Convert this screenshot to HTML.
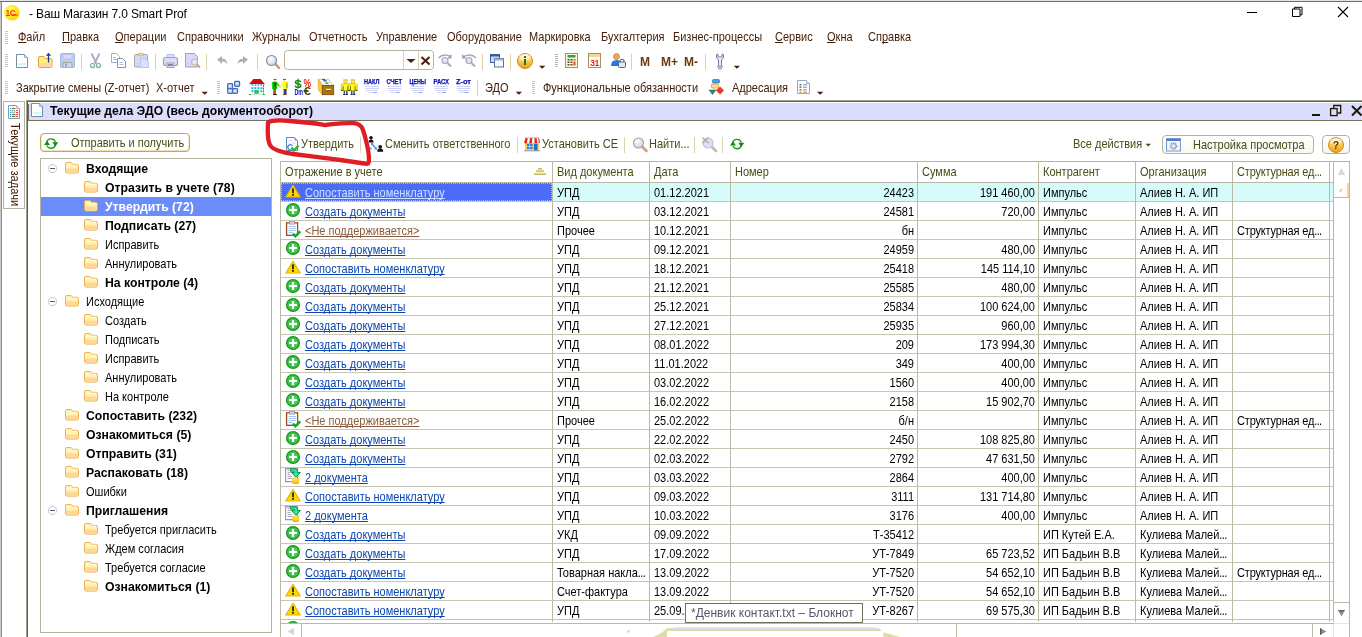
<!DOCTYPE html>
<html lang="ru"><head><meta charset="utf-8"><title>Ваш Магазин 7.0 Smart Prof</title>
<style>
html,body{margin:0;padding:0;background:#fff;width:1362px;height:637px;overflow:hidden}
body{will-change:transform;background:transparent;position:relative;font-family:"Liberation Sans",sans-serif;font-size:13px;color:#000;line-height:1}
.abs,.abs>*{position:absolute}
.t{position:absolute;white-space:nowrap;line-height:14px;height:14px;transform:scaleX(.846);transform-origin:0 0}
#ttl,#tip{transform:none}
.mn{color:#46200a;top:30px}
.mn u{text-decoration:underline;text-underline-offset:1px;text-decoration-skip-ink:none}
.tb{color:#46200a}
.ol{color:#4b4b14}
.grip{position:absolute;width:3px;height:13px;background:repeating-linear-gradient(to bottom,#c2c2b0 0,#c2c2b0 1px,#fff 1px,#fff 2px)}
.sep{position:absolute;width:1px;height:16px;background:#dcd4ae;margin-top:2px}
/* child window */
#cw{position:absolute;left:26px;top:100px;width:1336px;height:537px;border-left:1px solid #a2a292;border-top:1px solid #a2a292;box-sizing:border-box;background:#fff}
#cw:before{content:"";position:absolute;left:0;top:0;width:1335px;height:536px;border-left:1px solid #5e5e48;border-top:1px solid #5e5e48;box-sizing:border-box}
#ct{position:absolute;left:2px;top:2px;width:1333px;height:17px;background:#dcdcfc;box-shadow:0 1px 0 #74745e,-1px 1px 0 #74745e}
#ctt{position:absolute;left:21px;top:1px;font-weight:700;font-size:13px;line-height:14px;white-space:nowrap;color:#000;transform:scaleX(.935);transform-origin:0 0}
/* tree */
#tree{position:absolute;left:40px;top:158px;width:232px;height:475px;border:1px solid #b4b4a0;box-sizing:border-box;background:#fff}
.tr{position:absolute;left:0;width:230px;height:19px}
.tr.sel{background:#6a8dfb}
.tr .fw{position:absolute;top:3px;margin-left:-.5px}
.tr .tt{position:absolute;top:2.5px;line-height:14px;white-space:nowrap;transform:scaleX(.846);transform-origin:0 0}
.tr .tt.b{font-weight:700;transform:scaleX(.94)}
.tr.sel .tt{color:#fff}
.ex{position:absolute;left:7px;top:5px;width:7px;height:7px;border:1px solid #c8c8d8;border-top-color:#c8c8f4;border-bottom-color:#c8c8b4;border-radius:50%;background:#fff}
.ex:after{content:"";position:absolute;left:1px;top:3px;width:5px;height:1px;background:#5a5a5a}
/* table */
#tbl{position:absolute;left:280px;top:161px;width:1070px;height:476px;background:#fff;overflow:hidden}
#tbl .vl{position:absolute;top:0;width:1px;height:461px;background:#b9b9a6}
.r{position:absolute;left:1px;width:1052px;height:19px;border-bottom:1px solid #c6c6b4;box-sizing:border-box}
.r .c{position:absolute;top:0;height:18px;line-height:19px;white-space:nowrap;transform:scaleX(.846);transform-origin:0 0}
.r .c1{transform:none}
.r .c4,.r .c5{transform-origin:100% 0}
.c1{left:0;width:271px}.c2{left:276px;width:92px}.c3{left:373px;width:76px}.c4{left:452px;width:181px;text-align:right}
.c5{left:638px;width:116px;text-align:right}.c6{left:762px;width:92px}.c7{left:859px;width:92px}.c8{left:956px;width:92px}
.hd .c{color:#4b4b14;line-height:20px;height:20px}
.ic{position:absolute;left:4px;top:0}
.lk{position:absolute;left:24px;top:0;color:#0d47b0;text-decoration:underline;text-underline-offset:1px;text-decoration-skip-ink:none;transform:scaleX(.846);transform-origin:0 0}
.lk.br{color:#8a5a3a}
.r.cur{background:#d6fbfb}
.r.cur .c1{background:#4a6cf8;outline:1px dotted #e0c040;outline-offset:-1px}
.r.cur .lk{color:#cfe0ff}
.e{letter-spacing:-.7px}
.r .c8{letter-spacing:-.2px}
.btn{position:absolute;box-sizing:border-box;border:1px solid #b4b4a0;border-radius:4px;background:linear-gradient(#ffffff,#f8f8f2)}
</style></head><body>
<svg width="0" height="0" style="position:absolute"><defs>
<linearGradient id="fg" x1="0" y1="0" x2="0" y2="1"><stop offset="0" stop-color="#fff3c4"/><stop offset=".45" stop-color="#ffe08a"/><stop offset="1" stop-color="#fbc65a"/></linearGradient>
<radialGradient id="yg" cx=".4" cy=".35" r=".7"><stop offset="0" stop-color="#ffff60"/><stop offset="1" stop-color="#ffd200"/></radialGradient>
</defs></svg>

<!-- window frame -->
<div style="position:absolute;left:0;top:0;width:1362px;height:1px;background:#e4e4e4"></div>
<div style="position:absolute;left:0;top:1px;width:1362px;height:1px;background:#6e6e6e"></div>
<div style="position:absolute;left:0;top:2px;width:1px;height:635px;background:#c8c8c8"></div>
<div style="position:absolute;left:1px;top:2px;width:1px;height:635px;background:#8c8c8c"></div>

<!-- title bar -->
<svg style="position:absolute;left:3px;top:4px" width="18" height="18" viewBox="0 0 18 18"><circle cx="9" cy="8.7" r="7.8" fill="url(#yg)"/><text x="2.6" y="11.6" font-family="Liberation Sans,sans-serif" font-weight="700" font-size="8.5" fill="#ff3c00" letter-spacing="-.6">1C</text><rect x="9" y="10.4" width="5.5" height="1.3" fill="#ff3c00"/></svg>
<div class="t" id="ttl" style="left:29px;top:6px;font-size:12px;letter-spacing:-.15px;line-height:16px;height:16px">- Ваш Магазин 7.0 Smart Prof</div>
<svg style="position:absolute;left:1240px;top:3px" width="122" height="22" viewBox="0 0 122 22"><path d="M7 9.5h10" stroke="#000" stroke-width="1"/><path d="M52.500 6h7.500v7.500h-7.500zM54.500 6v-1.700h7.500v7.500h-2" fill="none" stroke="#000" stroke-width="1"/><path d="M98 4l10 10M108 4l-10 10" stroke="#000" stroke-width="1.100"/></svg>

<!-- menu -->
<div class="grip" style="left:5px;top:31px;height:13px"></div>
<div class="t mn" style="left:18px"><u>Ф</u>айл</div>
<div class="t mn" style="left:62px"><u>П</u>равка</div>
<div class="t mn" style="left:115px"><u>О</u>перации</div>
<div class="t mn" style="left:177px">Справочники</div>
<div class="t mn" style="left:252px">Журналы</div>
<div class="t mn" style="left:309px">Отчетность</div>
<div class="t mn" style="left:376px">Управление</div>
<div class="t mn" style="left:447px">Оборудование</div>
<div class="t mn" style="left:529px">Маркировка</div>
<div class="t mn" style="left:601px">Бухгалтерия</div>
<div class="t mn" style="left:673px">Бизнес-процессы</div>
<div class="t mn" style="left:775px"><u>С</u>ервис</div>
<div class="t mn" style="left:827px"><u>О</u>кна</div>
<div class="t mn" style="left:868px">Сп<u>р</u>авка</div>

<!-- toolbar 1 -->
<div class="grip" style="left:5px;top:54px"></div>
<!-- toolbar 1 icons -->
<svg style="position:absolute;left:0;top:48px" width="760" height="26" viewBox="0 48 760 26">
<defs>
<linearGradient id="og" x1="0" y1="0" x2="0" y2="1"><stop offset="0" stop-color="#fff2c8"/><stop offset=".5" stop-color="#ffc84a"/><stop offset="1" stop-color="#f09a18"/></linearGradient>
<radialGradient id="lens" cx=".4" cy=".35" r=".7"><stop offset="0" stop-color="#ffffff"/><stop offset="1" stop-color="#b8d4f8"/></radialGradient>
</defs>
<!-- new -->
<path d="M16.5 54.5h8l3 3v10h-11z" fill="#fff" stroke="#6f8f9c" stroke-width="1"/>
<path d="M24.5 54.5v3h3" fill="#d8d8fc" stroke="#8aa0c0" stroke-width=".8"/>
<rect x="18" y="63" width="8" height="2.5" fill="#d4f4ff"/>
<!-- open -->
<path d="M38.5 58 q0 -1.5 1.5 -1.5h4l1.5 2h5q1.5 0 1.5 1.5v6q0 1.500 -1.500 1.500h-10.500q-1.500 0 -1.500 -1.500z" fill="#ffee88" stroke="#e8a030" stroke-width="1"/>
<path d="M39 63h12.500v3q0 1 -1 1h-10.500q-1 0 -1 -1z" fill="#ffd8a8"/>
<path d="M48.500 62.500v-8" stroke="#1c3c88" stroke-width="1.300"/><path d="M45.800 55.800l2.700 -3l2.700 3z" fill="#1c3c88"/>
<!-- save disabled -->
<rect x="60.500" y="53.500" width="14" height="14" rx="1" fill="#b8d0f8" stroke="#a8b4d8" stroke-width="1"/>
<rect x="63" y="54.500" width="9" height="4.500" fill="#d0dcff" stroke="#c0b8e8" stroke-width=".8"/>
<path d="M63 67v-4.500h9v4.500" fill="#c8d8fc" stroke="#a8a490" stroke-width="1"/><rect x="65" y="63.500" width="2" height="3" fill="#a8a490"/>
<!-- sep -->
<rect x="81" y="54" width="1" height="16" fill="#dcd2a4"/>
<!-- scissors -->
<path d="M91.500 53.500l5 10M99.500 53.500l-5 10" stroke="#a8a8c8" stroke-width="1.800"/>
<circle cx="92.500" cy="65.500" r="2" fill="#fff" stroke="#78a8b0" stroke-width="1.200"/><circle cx="98.500" cy="65.500" r="2" fill="#fff" stroke="#78a8b0" stroke-width="1.200"/>
<!-- copy -->
<path d="M111.500 53.500h5l3 3v6h-8z" fill="#fff" stroke="#a0a8d0" stroke-width="1"/><path d="M113 57.500h3M113 59.500h4" stroke="#b0b8e0" stroke-width="1"/>
<path d="M117.500 58.500h5l3 3v6h-8z" fill="#fff" stroke="#8098b0" stroke-width="1"/><path d="M119.500 62.500h3M119.500 64.500h4" stroke="#a8c0f0" stroke-width="1"/>
<!-- paste disabled -->
<rect x="134.500" y="54.500" width="13" height="12.500" rx="1" fill="#d8d8fc" stroke="#a8a898" stroke-width="1"/>
<rect x="138.500" y="53.300" width="5" height="2.500" fill="#e8dc98" stroke="#c8b080" stroke-width=".7"/>
<path d="M140.500 58.500h5l3 3v6h-8z" fill="#dce0ff" stroke="#b0c8f8" stroke-width="1"/><rect x="136.500" y="63" width="2.500" height="1.500" fill="#b8d0f8"/>
<!-- sep -->
<rect x="155" y="54" width="1" height="16" fill="#dcd2a4"/>
<!-- print disabled -->
<rect x="167" y="54.500" width="7" height="4" fill="#dcdcfc" stroke="#b0b8e0" stroke-width=".8"/>
<rect x="163.500" y="57.500" width="14" height="8" rx="2" fill="#dcdcfc" stroke="#a8a490" stroke-width="1.200"/>
<rect x="167" y="63" width="7" height="4.500" fill="#dcdcfc" stroke="#a8a490" stroke-width="1"/><rect x="168" y="64" width="5" height="2" fill="#8088a8"/>
<!-- preview disabled -->
<path d="M185.500 53.500h9l3 3v10.500h-12z" fill="#d8d8fc" stroke="#a8a498" stroke-width="1"/><rect x="187" y="63" width="3" height="1.500" fill="#b8d0f8"/>
<circle cx="194.500" cy="62" r="3" fill="#e0e4ff" stroke="#d8b898" stroke-width="1.200"/><path d="M197 64.500l3 3" stroke="#b0ac98" stroke-width="2"/>
<!-- sep -->
<rect x="206" y="54" width="1" height="16" fill="#dcd2a4"/>
<!-- undo / redo disabled -->
<path d="M217 59.500l5 -3.500v2.500q5 0 5.500 6q-1.500 -3 -5.500 -3v2.500z" fill="#a8b8a8"/>
<path d="M248 59.500l-5 -3.500v2.500q-5 0 -5.500 6q1.500 -3 5.500 -3v2.500z" fill="#a8b0b8"/>
<!-- sep -->
<rect x="257" y="54" width="1" height="16" fill="#dcd2a4"/>
<!-- magnifier -->
<path d="M275.500 64l3.500 4" stroke="#c89878" stroke-width="2.400" stroke-linecap="round"/>
<circle cx="271.500" cy="60.500" r="5" fill="url(#lens)" stroke="#8a8a8a" stroke-width="1.100"/>
<!-- input -->
<rect x="284.500" y="50.500" width="149" height="19" rx="3" fill="#fff" stroke="#b4b498" stroke-width="1"/>
<path d="M403.500 51v18M418.500 51v18" stroke="#d8d4b0" stroke-width="1"/>
<path d="M406.500 59h9l-4.500 4z" fill="#46200a"/>
<path d="M421.500 57l8 7.500M429.500 57l-8 7.500" stroke="#46200a" stroke-width="2"/>
<!-- find next / prev disabled -->
<g id="fn"><path d="M438.500 58q5 -5 12 -1.500" fill="none" stroke="#98a8c0" stroke-width="1.500"/><path d="M451.500 54v4.500h-4.500z" fill="#98a8c0"/>
<circle cx="445" cy="60.500" r="3" fill="#dce4ff" stroke="#b0a8b0" stroke-width="1.200"/><path d="M447.500 63l3.500 3.500" stroke="#b0a8a0" stroke-width="2"/></g>
<g><path d="M476 58q-5 -5 -12 -1.500" fill="none" stroke="#98a8c0" stroke-width="1.500"/><path d="M462 54v4.500h4.500z" fill="#98a8c0"/>
<circle cx="469" cy="60.500" r="3" fill="#dce4ff" stroke="#b0a8b0" stroke-width="1.200"/><path d="M471.500 63l3.500 3.500" stroke="#b0a8a0" stroke-width="2"/></g>
<rect x="482" y="54" width="1" height="16" fill="#dcd2a4"/>
<!-- windows -->
<rect x="490.500" y="54.500" width="9" height="8" fill="#c8d8f8" stroke="#3c5c98" stroke-width="1"/><rect x="490.500" y="54.500" width="9" height="2" fill="#3c5c98"/>
<rect x="494.500" y="58.500" width="9" height="8.500" fill="#f4f8ff" stroke="#587098" stroke-width="1"/><rect x="494.500" y="58.500" width="9" height="2" fill="#a0b0d0"/>
<rect x="510" y="54" width="1" height="16" fill="#dcd2a4"/>
<!-- info -->
<circle cx="525" cy="61" r="7.500" fill="url(#og)" stroke="#d08818" stroke-width="1"/>
<ellipse cx="525" cy="57.500" rx="5.500" ry="3.500" fill="#fff" opacity=".55"/>
<rect x="524" y="59" width="2" height="6" fill="#187818"/><rect x="524" y="56" width="2" height="2" fill="#187818"/>
<path d="M539 65.800h6.400l-3.200 3z" fill="#46200a"/>
<!-- grip -->
<g fill="#b9b9a6"><rect x="555" y="54" width="3" height="1"/><rect x="555" y="56" width="3" height="1"/><rect x="555" y="58" width="3" height="1"/><rect x="555" y="60" width="3" height="1"/><rect x="555" y="62" width="3" height="1"/><rect x="555" y="64" width="3" height="1"/><rect x="555" y="66" width="3" height="1"/></g>
<!-- calc -->
<rect x="565.500" y="53.500" width="12" height="14" fill="#fff8dc" stroke="#a89060" stroke-width="1"/>
<rect x="567.500" y="55" width="8" height="2.500" fill="#30a040"/>
<g fill="#584830"><rect x="567.500" y="59" width="2" height="1.500"/><rect x="570.500" y="59" width="2" height="1.500"/><rect x="567.500" y="61.500" width="2" height="1.500"/><rect x="570.500" y="61.500" width="2" height="1.500"/><rect x="567.500" y="64" width="2" height="1.500"/><rect x="570.500" y="64" width="2" height="1.500"/></g>
<g fill="#e04820"><rect x="573.500" y="59" width="2" height="1.500"/><rect x="573.500" y="61.500" width="2" height="4"/></g>
<!-- calendar -->
<rect x="588.500" y="53.500" width="12" height="14" fill="#fff" stroke="#a89060" stroke-width="1"/><rect x="589" y="54" width="11" height="3" fill="#f0d890"/>
<text x="590" y="66" font-family="Liberation Sans,sans-serif" font-size="9" font-weight="700" fill="#e83010" letter-spacing="-.6">31</text>
<!-- user lock -->
<circle cx="616.500" cy="56.500" r="3" fill="#e8a860" stroke="#b07030" stroke-width=".6"/>
<path d="M611 66q0 -6 5.500 -6q3 0 4 2v4z" fill="#2878d8"/>
<rect x="618.500" y="62" width="7" height="5.500" rx="1" fill="#e0e8f8" stroke="#506888" stroke-width="1"/><path d="M620 62v-1.500q2 -2.500 4 0v1.500" fill="none" stroke="#506888" stroke-width="1.200"/>
<rect x="631" y="54" width="1" height="16" fill="#dcd2a4"/>
<text x="640" y="66" font-family="Liberation Sans,sans-serif" font-size="12" font-weight="700" fill="#6a3a0a">M</text>
<text x="661" y="66" font-family="Liberation Sans,sans-serif" font-size="12" font-weight="700" fill="#6a3a0a">M+</text>
<text x="684" y="66" font-family="Liberation Sans,sans-serif" font-size="12" font-weight="700" fill="#6a3a0a">M-</text>
<rect x="705" y="54" width="1" height="16" fill="#dcd2a4"/>
<!-- wrench -->
<path d="M716.500 54.500q-1 4 2 5.500v5q-1.500 2 0 3.500q1.500 1 3 0q1.500 -1.500 0 -3.500v-5q3 -1.500 2 -5.500l-1.500 -.5v3h-4v-3z" fill="#e8ecff" stroke="#7880a8" stroke-width="1"/>
<circle cx="720" cy="66.500" r="1" fill="#7880a8"/>
<path d="M733.700 65.800h6.400l-3.200 3z" fill="#46200a"/>
</svg>


<!-- toolbar 2 -->
<div class="grip" style="left:5px;top:81px"></div>
<div class="t tb" style="left:16px;top:81px">Закрытие смены (Z-отчет)</div>
<div class="t tb" style="left:156px;top:81px">Х-отчет</div>
<div class="grip" style="left:217px;top:81px"></div>
<div class="t tb" style="left:485px;top:81px">ЭДО</div>
<div class="grip" style="left:532px;top:81px"></div>
<div class="t tb" style="left:543px;top:81px">Функциональные обязанности</div>
<div class="t tb" style="left:732px;top:81px">Адресация</div>

<!-- toolbar 2 icons -->
<svg style="position:absolute;left:0;top:76px" width="840" height="24" viewBox="0 76 840 24">
<path d="M201.500 91.700h6.400l-3.200 3z" fill="#46200a"/>
<!-- blocks -->
<g stroke="#4a70b0" stroke-width="1.200" fill="#b4d0f8"><rect x="227.600" y="83.600" width="5" height="5" rx=".8"/><rect x="227.600" y="88.600" width="5" height="4.800" rx=".8"/><rect x="232.600" y="88.600" width="5" height="4.800" rx=".8"/><rect x="234.600" y="81.400" width="5" height="5" rx=".8"/></g>
<g fill="#e8f4ff"><rect x="229" y="85" width="2" height="1.500"/><rect x="229" y="90" width="2" height="1.500"/><rect x="234" y="90" width="2" height="1.500"/><rect x="236" y="82.800" width="2.200" height="1.500"/></g>
<!-- house -->
<path d="M249 84.300l4.300 -5.300h7.400l4.300 5.300z" fill="#e01010"/><path d="M251.500 83.300h11M252.500 81.500h9M253.500 80h7" stroke="#900808" stroke-width=".8" stroke-dasharray=".8 .8"/>
<rect x="250.500" y="84.300" width="13" height="9.200" fill="#fff"/>
<g fill="#10a8e8"><rect x="251.500" y="84.300" width="1.800" height="1.400"/><rect x="254.500" y="84.300" width="1.800" height="1.400"/><rect x="257.500" y="84.300" width="1.800" height="1.400"/><rect x="260.500" y="84.300" width="1.800" height="1.400"/><rect x="251.500" y="87.200" width="1.800" height="1.800"/><rect x="254.500" y="87.200" width="1.800" height="1.800"/><rect x="257.500" y="87.200" width="1.800" height="1.800"/><rect x="260.500" y="87.200" width="1.800" height="1.800"/><rect x="251.500" y="90.300" width="1.800" height="1.800"/><rect x="260.500" y="90.300" width="1.800" height="1.800"/></g>
<rect x="254.700" y="90.300" width="3.800" height="3.300" fill="#10d838" stroke="#18a030" stroke-width=".5"/>
<path d="M263.500 84.500v9" stroke="#186838" stroke-width="1" stroke-dasharray="1 .7"/>
<path d="M249 94.500h2.300M262.500 94.500h2.500" stroke="#10c828" stroke-width="1.200"/><path d="M253 94.300h7.500" stroke="#d8d4fc" stroke-width="1.200"/><path d="M251 93.500h2M260.500 93.500h2" stroke="#e8dcc0" stroke-width=".8"/>
<!-- handshake -->
<path d="M273.500 79.500h3" stroke="#a85818" stroke-width="1.200"/><rect x="274" y="80" width="2.500" height="2" fill="#ffe0d0"/>
<path d="M283 79.500h3" stroke="#a85818" stroke-width="1.200"/><rect x="283" y="80" width="2.500" height="2" fill="#ffe0d0"/>
<path d="M272 82.500q0 -.7 .7 -.7h3.600q.7 0 1.200 .6l2.500 3.800l-.8 .8l-2 -2v4h-5.200z" fill="#10e010"/><rect x="273.300" y="82" width="3" height="7" fill="#109018"/><rect x="274.500" y="82.500" width="1" height="3.500" fill="#583010"/>
<path d="M287.700 82.500q0 -.7 -.7 -.7h-3.600q-.7 0 -1.200 .6l-2.500 3.800l.8 .8l2 -2v4h5.200z" fill="#ffff10"/><rect x="286.300" y="82.500" width="1.200" height="6" fill="#a89808"/>
<rect x="279" y="86.300" width="2.200" height="1.500" fill="#ffc8c8"/>
<rect x="273.200" y="89" width="2.800" height="5" fill="#a06810"/><path d="M273 94.500h3.800" stroke="#481808" stroke-width="1.100"/>
<rect x="283.600" y="89" width="1.600" height="5" fill="#1048d0"/><rect x="285.200" y="89" width="1.300" height="5" fill="#101860"/><path d="M283 94.500h3.800" stroke="#904808" stroke-width="1.100"/>
<!-- $% -->
<text x="294.300" y="87.800" font-family="Liberation Sans,sans-serif" font-size="11.500" font-weight="700" fill="#109010" textLength="7.500" lengthAdjust="spacingAndGlyphs">$</text><path d="M298.100 78.600v9.600" stroke="#109010" stroke-width="1.100"/>
<text x="303.500" y="87" font-family="Liberation Sans,sans-serif" font-size="10.500" font-weight="700" fill="#f81808" textLength="7.500" lengthAdjust="spacingAndGlyphs">%</text>
<text x="294.500" y="95" font-family="Liberation Sans,sans-serif" font-size="8.500" font-weight="700" fill="#0808b8" textLength="8.500" lengthAdjust="spacingAndGlyphs">Dm</text>
<text x="303.500" y="95.200" font-family="Liberation Sans,sans-serif" font-size="10" font-weight="700" fill="#484808" textLength="7.500" lengthAdjust="spacingAndGlyphs">€</text>
<!-- drawer -->
<path d="M318.300 79.300h10l5.400 6.200h-11.500z" fill="#f4fbff" stroke="#d8a010" stroke-width=".6"/>
<path d="M319 80l3.500 5h10.500" fill="none" stroke="#c8ecf8" stroke-width="1.200"/>
<path d="M322 79.500h3" stroke="#f02010" stroke-width="1.200"/><path d="M323.500 80.800h3" stroke="#1030d0" stroke-width="1.200"/><path d="M324.500 82h3" stroke="#f0d010" stroke-width="1.200"/><path d="M325.500 83.200h3" stroke="#20a020" stroke-width="1.200"/>
<path d="M318.300 79.300l4 6.200v9.300l-4 -5z" fill="#ffd020" stroke="#e09808" stroke-width=".6"/>
<rect x="322.300" y="85.500" width="11.400" height="9.200" fill="#a87810" stroke="#803808" stroke-width=".8"/><rect x="326" y="88.800" width="5" height="1.600" fill="#f8f088"/><rect x="326" y="90.400" width="5" height=".800" fill="#703008"/>
<!-- people -->
<g id="pp"><rect x="343.300" y="79" width="4.500" height="2.500" fill="#f8f020"/><path d="M343.300 80.200h4.500" stroke="#c0b010" stroke-width=".6"/><rect x="343.600" y="81.500" width="4" height="2.300" fill="#ffd8b8"/><path d="M343.600 82.300h1.200M346.400 82.300h1.200" stroke="#f08040" stroke-width=".8"/>
<path d="M341.200 90.500v-4.500q0 -2.300 2.300 -2.300h4.200q2.300 0 2.300 2.300v4.500z" fill="#ffff10" stroke="#a8a008" stroke-width=".6"/><path d="M343.200 86v4.500M347.800 86v4.500" stroke="#605808" stroke-width=".8"/><path d="M341.200 90.300h1.600M348.300 90.300h1.600" stroke="#181808" stroke-width=".9"/>
<rect x="343.600" y="90.700" width="1.600" height="3.500" fill="#585c68"/><rect x="346" y="90.700" width="1.600" height="3.500" fill="#585c68"/><path d="M343.200 94.500h2.200M345.800 94.500h2.200" stroke="#103060" stroke-width="1.100"/></g>
<use href="#pp" x="7.300"/>
<!-- НАКЛ etc. -->
<g font-family="Liberation Sans,sans-serif" font-size="7" font-weight="700" fill="#1010a8" stroke="#1010a8" stroke-width=".25">
<text x="364" y="84" textLength="15.500" lengthAdjust="spacingAndGlyphs">НАКЛ</text>
<text x="386.500" y="84" textLength="15.500" lengthAdjust="spacingAndGlyphs">СЧЕТ</text>
<text x="409.500" y="84" textLength="16.500" lengthAdjust="spacingAndGlyphs">ЦЕНЫ</text>
<text x="433.500" y="84" textLength="15.500" lengthAdjust="spacingAndGlyphs">РАСХ</text>
<text x="456" y="84" textLength="15" lengthAdjust="spacingAndGlyphs">Z-от</text>
</g>
<g id="ln" stroke="#d0d4f4" stroke-width="1"><path d="M365 86.500h14M365 88.500h14M366 90.500h12M368 92.500h8"/><path d="M374 92.500h3" stroke="#90a0f0"/></g>
<use href="#ln" x="22.500"/><use href="#ln" x="45.500"/><use href="#ln" x="69"/><use href="#ln" x="91.500"/>
<rect x="477" y="80" width="1" height="16" fill="#dcd2a4"/>
<path d="M515.700 91.700h6.400l-3.200 3z" fill="#46200a"/>
<!-- flow icon -->
<rect x="712.500" y="79.500" width="7" height="3.500" rx="1" fill="#48a0e8" stroke="#2070c0" stroke-width=".7"/>
<rect x="711.500" y="84" width="7" height="4" rx="1" fill="#f8e0a0" stroke="#d09830" stroke-width=".8"/>
<path d="M709 90h7l-3.500 4.500z" fill="#308878" stroke="#205850" stroke-width=".5"/>
<path d="M720 86.500l4 4l-4 4l-4 -4z" fill="#f03820"/>
<!-- list icon -->
<path d="M797.500 80.500h9l3 3v10h-12z" fill="#fff" stroke="#98a8c0" stroke-width="1"/><path d="M806.500 80.500v3h3" fill="#d8d8fc" stroke="#98a8c0" stroke-width=".7"/>
<g><rect x="799.500" y="84" width="2" height="1.500" fill="#4080d0"/><rect x="803" y="84" width="4" height="1.500" fill="#a0b8e0"/><rect x="799.500" y="86.500" width="2" height="1.500" fill="#e05030"/><rect x="803" y="86.500" width="4" height="1.500" fill="#e0a090"/><rect x="799.500" y="89" width="2" height="1.500" fill="#30a050"/><rect x="803" y="89" width="4" height="1.500" fill="#a0b8e0"/><rect x="799.500" y="91.500" width="2" height="1.500" fill="#e0a030"/><rect x="803" y="91.500" width="4" height="1.500" fill="#e0a090"/></g>
<path d="M817 91.700h6.400l-3.200 3z" fill="#46200a"/>
</svg>

<!-- left tab strip -->
<div style="position:absolute;left:3px;top:101px;width:22px;height:108px;border:1px solid #b2b2a2;box-sizing:border-box;background:#fff"></div>
<div class="t" id="vt" style="left:7.500px;top:123px;font-size:13px;transform:scaleY(.855);transform-origin:0 0;writing-mode:vertical-rl;height:auto;line-height:14px;width:14px;color:#46200a">Текущие задачи</div>

<!-- child window -->
<div id="cw"><div id="ct"><div id="ctt">Текущие дела ЭДО (весь документооборот)</div></div></div>

<!-- send/receive button -->
<div class="btn" style="left:40px;top:133px;width:150px;height:19px;border-color:#b8b050;box-shadow:inset 0 -1px 0 #f4dcb4,inset 1px 0 0 #f4e4d0,inset -1px 0 0 #f4e4d0;background:#fff"></div>
<div class="t ol" style="left:71px;top:136px">Отправить и получить</div>

<!-- form toolbar -->
<div class="t ol" style="left:301px;top:137px">Утвердить</div>
<div class="sep" style="left:360px;top:135px"></div>
<div class="t ol" style="left:385px;top:137px">Сменить ответственного</div>
<div class="sep" style="left:517px;top:135px"></div>
<div class="t ol" style="left:542px;top:137px">Установить СЕ</div>
<div class="sep" style="left:624px;top:135px"></div>
<div class="t ol" style="left:649px;top:137px">Найти<span>...</span></div>
<div class="sep" style="left:694px;top:135px"></div>
<div class="sep" style="left:722px;top:135px"></div>
<div class="t ol" style="left:1073px;top:137px">Все действия</div>
<div class="btn" style="left:1162px;top:135px;width:152px;height:19px"></div>
<div class="t ol" style="left:1193px;top:138px">Настройка просмотра</div>
<div class="btn" style="left:1322px;top:135px;width:28px;height:19px"></div>

<!-- form toolbar icons -->
<svg style="position:absolute;left:0;top:128px" width="1362" height="30" viewBox="0 128 1362 30">
<!-- refresh in send button -->
<g id="rf"><path d="M46.600 142.500a4.600 4.600 0 0 1 8.800 -.500" fill="none" stroke="#1c9c1c" stroke-width="1.300"/><path d="M55.400 145a4.600 4.600 0 0 1 -8.600 .500" fill="none" stroke="#1c9c1c" stroke-width="1.300"/><path d="M52.300 142.300h6l-3 4.200z" fill="#108810"/><path d="M44 145h6l-3 -4.200z" fill="#108810"/></g>
<!-- approve doc -->
<path d="M286.500 137.500h8l3 3v10h-11z" fill="#fff" stroke="#6088b0" stroke-width="1"/><path d="M294.500 137.500v3h3z" fill="#7098c0"/>
<path d="M288.500 140.500h4M288.500 143h2M292 143h3.500" stroke="#d0d0f8" stroke-width="1"/>
<path d="M292.500 146a2.500 2.500 0 1 0 -1 3.500" fill="none" stroke="#3888e8" stroke-width="1.300"/>
<path d="M291.500 147.500l2.500 3l4.500 -5" fill="none" stroke="#28b828" stroke-width="2.200"/>
<!-- change responsible -->
<g fill="#101010"><circle cx="371" cy="137.800" r="1.800"/><path d="M368.500 142.500q0 -3 2.500 -3t2.500 3z"/><circle cx="380.200" cy="146.800" r="1.800"/><path d="M377.200 151.800q0 -3.500 3 -3.500t3 3.500z"/></g>
<path d="M372 144l4 4.500" stroke="#3898f0" stroke-width="1.400"/><path d="M370.800 142.800l3 .3l-2.500 2.500z M377.200 149.800l-3 -.3l2.500 -2.500z" fill="#3898f0"/><path d="M369.500 148.500l2.500 1.500l-1 -3z" fill="#3898f0"/>
<!-- shop -->
<rect x="525" y="142.500" width="14" height="8" fill="#f8d040"/>
<rect x="527" y="144" width="5.500" height="5" fill="#2878e0"/><path d="M529.700 144v5M527 146.500h5.500" stroke="#c8e0ff" stroke-width=".8"/>
<rect x="534" y="144" width="3.500" height="6.500" fill="#2070d0"/>
<path d="M524 150.800h16" stroke="#8098b8" stroke-width="1"/>
<path d="M525 138h14l1 4.500q-1 1.500 -2.500 0q-1.500 1.500 -3 0q-1.500 1.500 -3 0q-1.500 1.500 -3 0q-1.500 1.500 -2.800 0z" fill="#fff" stroke="#c0d8e8" stroke-width=".4"/>
<path d="M525.500 138h2.200l-.8 5.200q-1.500 .8 -2.800 -.7z M530 138h2.200l-.2 5.200q-1.500 .8 -2.800 0z M534.500 138h2.200l.6 5.200q-1.500 .8 -2.800 0z M538.200 138h.8l1 4.500q-.5 .8 -1.200 .8z" fill="#e82818"/>
<path d="M525 137.700h14" stroke="#a8c8e8" stroke-width=".8"/>
<!-- find -->
<path d="M642.500 147l4 4" stroke="#d0a088" stroke-width="2.600" stroke-linecap="round"/>
<circle cx="638.500" cy="143" r="5" fill="url(#lens)" stroke="#c09878" stroke-width="1.100"/>
<!-- cancel find (disabled) -->
<path d="M712 147l4 4" stroke="#c8b8a8" stroke-width="2.600" stroke-linecap="round"/>
<circle cx="708" cy="143" r="5" fill="#dcdcfc" stroke="#c8c0d0" stroke-width="1.100"/>
<path d="M702.500 137.500l6 5.500M708.500 137.500l-6 5.500" stroke="#b0b0a8" stroke-width="1.600"/>
<!-- refresh -->
<use href="#rf" x="686" y=".500"/>
<!-- all actions arrow -->
<path d="M1145.500 143.800h5.600l-2.800 2.700z" fill="#4b4b14"/>
<!-- settings icon -->
<rect x="1166.500" y="138.500" width="14" height="12.500" fill="#f0f4ff" stroke="#7898c8" stroke-width="1"/><rect x="1167" y="139" width="13" height="2" fill="#4880d0"/>
<circle cx="1173.500" cy="146" r="3" fill="#c8cce0" stroke="#8890a8" stroke-width="1.400" stroke-dasharray="1.200 1"/><circle cx="1173.500" cy="146" r="1" fill="#fff"/>
<!-- help -->
<circle cx="1336" cy="145" r="7.500" fill="url(#og)" stroke="#d08818" stroke-width="1"/><ellipse cx="1336" cy="141.500" rx="5.500" ry="3.300" fill="#fff" opacity=".5"/>
<text x="1332.800" y="149" font-family="Liberation Sans,sans-serif" font-size="10.500" font-weight="700" fill="#5a3a10">?</text>
</svg>
<!-- red annotation -->
<svg style="position:absolute;left:255px;top:110px;z-index:5" width="130" height="62" viewBox="255 110 130 62"><path d="M268 122.500 C272 119.800 282 120.300 290 121 C302 122 313 123 321 124.300 L325.300 125.200 L329.500 124.300 C338 123.500 348 122.800 354 123.200 C359 123.800 361.500 126 362.800 129.500 C364.500 134 366 140 367.500 147 C368.500 152 369.200 158 368.800 162 C368.500 164 367 164 364.500 163.500 C356 162.200 348 161 340.500 160 C330 158.500 320 157.300 312 156.300 C305 155.400 298 154.600 293 154 C287 153.200 282 152 278.500 150.800 C274 149.200 271.500 147.500 270 145 C268.500 142 268 138 267.800 134 C267.700 130 267.700 126 268 122.500 Z" fill="none" stroke="#e01c24" stroke-width="4.300" stroke-linejoin="round" stroke-linecap="round"/></svg>

<!-- tree -->
<div id="tree">
<div class="tr" style="top:0px"><span class="ex"></span><span class="fw" style="left:24px"><svg class="fo" width="14" height="12" viewBox="0 0 15 13" preserveAspectRatio="none"><path d="M0.5 2 Q0.5 0.5 2 0.5 H6 Q7 0.5 7.5 1.5 L8 2.5 H12.5 Q14.5 2.5 14.5 4.5 V10 Q14.5 12 12.5 12 H2.5 Q0.5 12 0.5 10 Z" fill="#fff3b0" stroke="#e8a848" stroke-width="1"/><path d="M1.2 7 H13.8 V10 Q13.8 11.3 12.5 11.3 H2.5 Q1.2 11.3 1.2 10 Z" fill="#ffd898"/><path d="M1.5 3.5 H13" stroke="#fffbe0" stroke-width="1"/></svg></span><span class="tt b" style="left:45px">Входящие</span></div>
<div class="tr" style="top:19px"><span class="fw" style="left:43px"><svg class="fo" width="14" height="12" viewBox="0 0 15 13" preserveAspectRatio="none"><path d="M0.5 2 Q0.5 0.5 2 0.5 H6 Q7 0.5 7.5 1.5 L8 2.5 H12.5 Q14.5 2.5 14.5 4.5 V10 Q14.5 12 12.5 12 H2.5 Q0.5 12 0.5 10 Z" fill="#fff3b0" stroke="#e8a848" stroke-width="1"/><path d="M1.2 7 H13.8 V10 Q13.8 11.3 12.5 11.3 H2.5 Q1.2 11.3 1.2 10 Z" fill="#ffd898"/><path d="M1.5 3.5 H13" stroke="#fffbe0" stroke-width="1"/></svg></span><span class="tt b" style="left:64px">Отразить в учете (78)</span></div>
<div class="tr sel" style="top:38px"><span class="fw" style="left:43px"><svg class="fo" width="14" height="12" viewBox="0 0 15 13" preserveAspectRatio="none"><path d="M0.5 2 Q0.5 0.5 2 0.5 H6 Q7 0.5 7.5 1.5 L8 2.5 H12.5 Q14.5 2.5 14.5 4.5 V10 Q14.5 12 12.5 12 H2.5 Q0.5 12 0.5 10 Z" fill="#fff3b0" stroke="#e8a848" stroke-width="1"/><path d="M1.2 7 H13.8 V10 Q13.8 11.3 12.5 11.3 H2.5 Q1.2 11.3 1.2 10 Z" fill="#ffd898"/><path d="M1.5 3.5 H13" stroke="#fffbe0" stroke-width="1"/></svg></span><span class="tt b" style="left:64px">Утвердить (72)</span></div>
<div class="tr" style="top:57px"><span class="fw" style="left:43px"><svg class="fo" width="14" height="12" viewBox="0 0 15 13" preserveAspectRatio="none"><path d="M0.5 2 Q0.5 0.5 2 0.5 H6 Q7 0.5 7.5 1.5 L8 2.5 H12.5 Q14.5 2.5 14.5 4.5 V10 Q14.5 12 12.5 12 H2.5 Q0.5 12 0.5 10 Z" fill="#fff3b0" stroke="#e8a848" stroke-width="1"/><path d="M1.2 7 H13.8 V10 Q13.8 11.3 12.5 11.3 H2.5 Q1.2 11.3 1.2 10 Z" fill="#ffd898"/><path d="M1.5 3.5 H13" stroke="#fffbe0" stroke-width="1"/></svg></span><span class="tt b" style="left:64px">Подписать (27)</span></div>
<div class="tr" style="top:76px"><span class="fw" style="left:43px"><svg class="fo" width="14" height="12" viewBox="0 0 15 13" preserveAspectRatio="none"><path d="M0.5 2 Q0.5 0.5 2 0.5 H6 Q7 0.5 7.5 1.5 L8 2.5 H12.5 Q14.5 2.5 14.5 4.5 V10 Q14.5 12 12.5 12 H2.5 Q0.5 12 0.5 10 Z" fill="#fff3b0" stroke="#e8a848" stroke-width="1"/><path d="M1.2 7 H13.8 V10 Q13.8 11.3 12.5 11.3 H2.5 Q1.2 11.3 1.2 10 Z" fill="#ffd898"/><path d="M1.5 3.5 H13" stroke="#fffbe0" stroke-width="1"/></svg></span><span class="tt" style="left:64px">Исправить</span></div>
<div class="tr" style="top:95px"><span class="fw" style="left:43px"><svg class="fo" width="14" height="12" viewBox="0 0 15 13" preserveAspectRatio="none"><path d="M0.5 2 Q0.5 0.5 2 0.5 H6 Q7 0.5 7.5 1.5 L8 2.5 H12.5 Q14.5 2.5 14.5 4.5 V10 Q14.5 12 12.5 12 H2.5 Q0.5 12 0.5 10 Z" fill="#fff3b0" stroke="#e8a848" stroke-width="1"/><path d="M1.2 7 H13.8 V10 Q13.8 11.3 12.5 11.3 H2.5 Q1.2 11.3 1.2 10 Z" fill="#ffd898"/><path d="M1.5 3.5 H13" stroke="#fffbe0" stroke-width="1"/></svg></span><span class="tt" style="left:64px">Аннулировать</span></div>
<div class="tr" style="top:114px"><span class="fw" style="left:43px"><svg class="fo" width="14" height="12" viewBox="0 0 15 13" preserveAspectRatio="none"><path d="M0.5 2 Q0.5 0.5 2 0.5 H6 Q7 0.5 7.5 1.5 L8 2.5 H12.5 Q14.5 2.5 14.5 4.5 V10 Q14.5 12 12.5 12 H2.5 Q0.5 12 0.5 10 Z" fill="#fff3b0" stroke="#e8a848" stroke-width="1"/><path d="M1.2 7 H13.8 V10 Q13.8 11.3 12.5 11.3 H2.5 Q1.2 11.3 1.2 10 Z" fill="#ffd898"/><path d="M1.5 3.5 H13" stroke="#fffbe0" stroke-width="1"/></svg></span><span class="tt b" style="left:64px">На контроле (4)</span></div>
<div class="tr" style="top:133px"><span class="ex"></span><span class="fw" style="left:24px"><svg class="fo" width="14" height="12" viewBox="0 0 15 13" preserveAspectRatio="none"><path d="M0.5 2 Q0.5 0.5 2 0.5 H6 Q7 0.5 7.5 1.5 L8 2.5 H12.5 Q14.5 2.5 14.5 4.5 V10 Q14.5 12 12.5 12 H2.5 Q0.5 12 0.5 10 Z" fill="#fff3b0" stroke="#e8a848" stroke-width="1"/><path d="M1.2 7 H13.8 V10 Q13.8 11.3 12.5 11.3 H2.5 Q1.2 11.3 1.2 10 Z" fill="#ffd898"/><path d="M1.5 3.5 H13" stroke="#fffbe0" stroke-width="1"/></svg></span><span class="tt" style="left:45px">Исходящие</span></div>
<div class="tr" style="top:152px"><span class="fw" style="left:43px"><svg class="fo" width="14" height="12" viewBox="0 0 15 13" preserveAspectRatio="none"><path d="M0.5 2 Q0.5 0.5 2 0.5 H6 Q7 0.5 7.5 1.5 L8 2.5 H12.5 Q14.5 2.5 14.5 4.5 V10 Q14.5 12 12.5 12 H2.5 Q0.5 12 0.5 10 Z" fill="#fff3b0" stroke="#e8a848" stroke-width="1"/><path d="M1.2 7 H13.8 V10 Q13.8 11.3 12.5 11.3 H2.5 Q1.2 11.3 1.2 10 Z" fill="#ffd898"/><path d="M1.5 3.5 H13" stroke="#fffbe0" stroke-width="1"/></svg></span><span class="tt" style="left:64px">Создать</span></div>
<div class="tr" style="top:171px"><span class="fw" style="left:43px"><svg class="fo" width="14" height="12" viewBox="0 0 15 13" preserveAspectRatio="none"><path d="M0.5 2 Q0.5 0.5 2 0.5 H6 Q7 0.5 7.5 1.5 L8 2.5 H12.5 Q14.5 2.5 14.5 4.5 V10 Q14.5 12 12.5 12 H2.5 Q0.5 12 0.5 10 Z" fill="#fff3b0" stroke="#e8a848" stroke-width="1"/><path d="M1.2 7 H13.8 V10 Q13.8 11.3 12.5 11.3 H2.5 Q1.2 11.3 1.2 10 Z" fill="#ffd898"/><path d="M1.5 3.5 H13" stroke="#fffbe0" stroke-width="1"/></svg></span><span class="tt" style="left:64px">Подписать</span></div>
<div class="tr" style="top:190px"><span class="fw" style="left:43px"><svg class="fo" width="14" height="12" viewBox="0 0 15 13" preserveAspectRatio="none"><path d="M0.5 2 Q0.5 0.5 2 0.5 H6 Q7 0.5 7.5 1.5 L8 2.5 H12.5 Q14.5 2.5 14.5 4.5 V10 Q14.5 12 12.5 12 H2.5 Q0.5 12 0.5 10 Z" fill="#fff3b0" stroke="#e8a848" stroke-width="1"/><path d="M1.2 7 H13.8 V10 Q13.8 11.3 12.5 11.3 H2.5 Q1.2 11.3 1.2 10 Z" fill="#ffd898"/><path d="M1.5 3.5 H13" stroke="#fffbe0" stroke-width="1"/></svg></span><span class="tt" style="left:64px">Исправить</span></div>
<div class="tr" style="top:209px"><span class="fw" style="left:43px"><svg class="fo" width="14" height="12" viewBox="0 0 15 13" preserveAspectRatio="none"><path d="M0.5 2 Q0.5 0.5 2 0.5 H6 Q7 0.5 7.5 1.5 L8 2.5 H12.5 Q14.5 2.5 14.5 4.5 V10 Q14.5 12 12.5 12 H2.5 Q0.5 12 0.5 10 Z" fill="#fff3b0" stroke="#e8a848" stroke-width="1"/><path d="M1.2 7 H13.8 V10 Q13.8 11.3 12.5 11.3 H2.5 Q1.2 11.3 1.2 10 Z" fill="#ffd898"/><path d="M1.5 3.5 H13" stroke="#fffbe0" stroke-width="1"/></svg></span><span class="tt" style="left:64px">Аннулировать</span></div>
<div class="tr" style="top:228px"><span class="fw" style="left:43px"><svg class="fo" width="14" height="12" viewBox="0 0 15 13" preserveAspectRatio="none"><path d="M0.5 2 Q0.5 0.5 2 0.5 H6 Q7 0.5 7.5 1.5 L8 2.5 H12.5 Q14.5 2.5 14.5 4.5 V10 Q14.5 12 12.5 12 H2.5 Q0.5 12 0.5 10 Z" fill="#fff3b0" stroke="#e8a848" stroke-width="1"/><path d="M1.2 7 H13.8 V10 Q13.8 11.3 12.5 11.3 H2.5 Q1.2 11.3 1.2 10 Z" fill="#ffd898"/><path d="M1.5 3.5 H13" stroke="#fffbe0" stroke-width="1"/></svg></span><span class="tt" style="left:64px">На контроле</span></div>
<div class="tr" style="top:247px"><span class="fw" style="left:24px"><svg class="fo" width="14" height="12" viewBox="0 0 15 13" preserveAspectRatio="none"><path d="M0.5 2 Q0.5 0.5 2 0.5 H6 Q7 0.5 7.5 1.5 L8 2.5 H12.5 Q14.5 2.5 14.5 4.5 V10 Q14.5 12 12.5 12 H2.5 Q0.5 12 0.5 10 Z" fill="#fff3b0" stroke="#e8a848" stroke-width="1"/><path d="M1.2 7 H13.8 V10 Q13.8 11.3 12.5 11.3 H2.5 Q1.2 11.3 1.2 10 Z" fill="#ffd898"/><path d="M1.5 3.5 H13" stroke="#fffbe0" stroke-width="1"/></svg></span><span class="tt b" style="left:45px">Сопоставить (232)</span></div>
<div class="tr" style="top:266px"><span class="fw" style="left:24px"><svg class="fo" width="14" height="12" viewBox="0 0 15 13" preserveAspectRatio="none"><path d="M0.5 2 Q0.5 0.5 2 0.5 H6 Q7 0.5 7.5 1.5 L8 2.5 H12.5 Q14.5 2.5 14.5 4.5 V10 Q14.5 12 12.5 12 H2.5 Q0.5 12 0.5 10 Z" fill="#fff3b0" stroke="#e8a848" stroke-width="1"/><path d="M1.2 7 H13.8 V10 Q13.8 11.3 12.5 11.3 H2.5 Q1.2 11.3 1.2 10 Z" fill="#ffd898"/><path d="M1.5 3.5 H13" stroke="#fffbe0" stroke-width="1"/></svg></span><span class="tt b" style="left:45px">Ознакомиться (5)</span></div>
<div class="tr" style="top:285px"><span class="fw" style="left:24px"><svg class="fo" width="14" height="12" viewBox="0 0 15 13" preserveAspectRatio="none"><path d="M0.5 2 Q0.5 0.5 2 0.5 H6 Q7 0.5 7.5 1.5 L8 2.5 H12.5 Q14.5 2.5 14.5 4.5 V10 Q14.5 12 12.5 12 H2.5 Q0.5 12 0.5 10 Z" fill="#fff3b0" stroke="#e8a848" stroke-width="1"/><path d="M1.2 7 H13.8 V10 Q13.8 11.3 12.5 11.3 H2.5 Q1.2 11.3 1.2 10 Z" fill="#ffd898"/><path d="M1.5 3.5 H13" stroke="#fffbe0" stroke-width="1"/></svg></span><span class="tt b" style="left:45px">Отправить (31)</span></div>
<div class="tr" style="top:304px"><span class="fw" style="left:24px"><svg class="fo" width="14" height="12" viewBox="0 0 15 13" preserveAspectRatio="none"><path d="M0.5 2 Q0.5 0.5 2 0.5 H6 Q7 0.5 7.5 1.5 L8 2.5 H12.5 Q14.5 2.5 14.5 4.5 V10 Q14.5 12 12.5 12 H2.5 Q0.5 12 0.5 10 Z" fill="#fff3b0" stroke="#e8a848" stroke-width="1"/><path d="M1.2 7 H13.8 V10 Q13.8 11.3 12.5 11.3 H2.5 Q1.2 11.3 1.2 10 Z" fill="#ffd898"/><path d="M1.5 3.5 H13" stroke="#fffbe0" stroke-width="1"/></svg></span><span class="tt b" style="left:45px">Распаковать (18)</span></div>
<div class="tr" style="top:323px"><span class="fw" style="left:24px"><svg class="fo" width="14" height="12" viewBox="0 0 15 13" preserveAspectRatio="none"><path d="M0.5 2 Q0.5 0.5 2 0.5 H6 Q7 0.5 7.5 1.5 L8 2.5 H12.5 Q14.5 2.5 14.5 4.5 V10 Q14.5 12 12.5 12 H2.5 Q0.5 12 0.5 10 Z" fill="#fff3b0" stroke="#e8a848" stroke-width="1"/><path d="M1.2 7 H13.8 V10 Q13.8 11.3 12.5 11.3 H2.5 Q1.2 11.3 1.2 10 Z" fill="#ffd898"/><path d="M1.5 3.5 H13" stroke="#fffbe0" stroke-width="1"/></svg></span><span class="tt" style="left:45px">Ошибки</span></div>
<div class="tr" style="top:342px"><span class="ex"></span><span class="fw" style="left:24px"><svg class="fo" width="14" height="12" viewBox="0 0 15 13" preserveAspectRatio="none"><path d="M0.5 2 Q0.5 0.5 2 0.5 H6 Q7 0.5 7.5 1.5 L8 2.5 H12.5 Q14.5 2.5 14.5 4.5 V10 Q14.5 12 12.5 12 H2.5 Q0.5 12 0.5 10 Z" fill="#fff3b0" stroke="#e8a848" stroke-width="1"/><path d="M1.2 7 H13.8 V10 Q13.8 11.3 12.5 11.3 H2.5 Q1.2 11.3 1.2 10 Z" fill="#ffd898"/><path d="M1.5 3.5 H13" stroke="#fffbe0" stroke-width="1"/></svg></span><span class="tt b" style="left:45px">Приглашения</span></div>
<div class="tr" style="top:361px"><span class="fw" style="left:43px"><svg class="fo" width="14" height="12" viewBox="0 0 15 13" preserveAspectRatio="none"><path d="M0.5 2 Q0.5 0.5 2 0.5 H6 Q7 0.5 7.5 1.5 L8 2.5 H12.5 Q14.5 2.5 14.5 4.5 V10 Q14.5 12 12.5 12 H2.5 Q0.5 12 0.5 10 Z" fill="#fff3b0" stroke="#e8a848" stroke-width="1"/><path d="M1.2 7 H13.8 V10 Q13.8 11.3 12.5 11.3 H2.5 Q1.2 11.3 1.2 10 Z" fill="#ffd898"/><path d="M1.5 3.5 H13" stroke="#fffbe0" stroke-width="1"/></svg></span><span class="tt" style="left:64px">Требуется пригласить</span></div>
<div class="tr" style="top:380px"><span class="fw" style="left:43px"><svg class="fo" width="14" height="12" viewBox="0 0 15 13" preserveAspectRatio="none"><path d="M0.5 2 Q0.5 0.5 2 0.5 H6 Q7 0.5 7.5 1.5 L8 2.5 H12.5 Q14.5 2.5 14.5 4.5 V10 Q14.5 12 12.5 12 H2.5 Q0.5 12 0.5 10 Z" fill="#fff3b0" stroke="#e8a848" stroke-width="1"/><path d="M1.2 7 H13.8 V10 Q13.8 11.3 12.5 11.3 H2.5 Q1.2 11.3 1.2 10 Z" fill="#ffd898"/><path d="M1.5 3.5 H13" stroke="#fffbe0" stroke-width="1"/></svg></span><span class="tt" style="left:64px">Ждем согласия</span></div>
<div class="tr" style="top:399px"><span class="fw" style="left:43px"><svg class="fo" width="14" height="12" viewBox="0 0 15 13" preserveAspectRatio="none"><path d="M0.5 2 Q0.5 0.5 2 0.5 H6 Q7 0.5 7.5 1.5 L8 2.5 H12.5 Q14.5 2.5 14.5 4.5 V10 Q14.5 12 12.5 12 H2.5 Q0.5 12 0.5 10 Z" fill="#fff3b0" stroke="#e8a848" stroke-width="1"/><path d="M1.2 7 H13.8 V10 Q13.8 11.3 12.5 11.3 H2.5 Q1.2 11.3 1.2 10 Z" fill="#ffd898"/><path d="M1.5 3.5 H13" stroke="#fffbe0" stroke-width="1"/></svg></span><span class="tt" style="left:64px">Требуется согласие</span></div>
<div class="tr" style="top:418px"><span class="fw" style="left:43px"><svg class="fo" width="14" height="12" viewBox="0 0 15 13" preserveAspectRatio="none"><path d="M0.5 2 Q0.5 0.5 2 0.5 H6 Q7 0.5 7.5 1.5 L8 2.5 H12.5 Q14.5 2.5 14.5 4.5 V10 Q14.5 12 12.5 12 H2.5 Q0.5 12 0.5 10 Z" fill="#fff3b0" stroke="#e8a848" stroke-width="1"/><path d="M1.2 7 H13.8 V10 Q13.8 11.3 12.5 11.3 H2.5 Q1.2 11.3 1.2 10 Z" fill="#ffd898"/><path d="M1.5 3.5 H13" stroke="#fffbe0" stroke-width="1"/></svg></span><span class="tt b" style="left:64px">Ознакомиться (1)</span></div>
</div>

<!-- table -->
<div id="tbl">
<div style="position:absolute;left:0;top:0;width:1070px;height:1px;background:#b4b4a0"></div>
<div class="r hd" style="top:1px;height:21px;border-bottom:1px solid #b9b9a6"><div class="c c1" style="left:4px;transform:scaleX(.846)">Отражение в учете</div><div class="c c2">Вид документа</div><div class="c c3">Дата</div><div class="c c4" style="text-align:left;left:454px;transform-origin:0 0">Номер</div><div class="c c5" style="text-align:left;left:641px;transform-origin:0 0">Сумма</div><div class="c c6">Контрагент</div><div class="c c7">Организация</div><div class="c c8">Структурная ед<span class="e">...</span></div></div>
<div class="r cur" style="top:22px"><div class="c c1"><svg class="ic" width="16" height="16" viewBox="0 0 16 16"><path d="M8 2.300 L15.200 14 H0.800 Z" fill="#ffd800" stroke="#e8b400" stroke-width="1.200" stroke-linejoin="round"/><rect x="7" y="5.300" width="2" height="5" rx=".5" fill="#3a3a00"/><rect x="7" y="11" width="2" height="1.800" fill="#3a3a00"/></svg><span class="lk">Сопоставить номенклатуру</span></div><div class="c c2">УПД</div><div class="c c3">01.12.2021</div><div class="c c4">24423</div><div class="c c5">191 460,00</div><div class="c c6">Импульс</div><div class="c c7">Алиев Н. А. ИП</div><div class="c c8"></div></div>
<div class="r" style="top:41px"><div class="c c1"><svg class="ic" width="16" height="16" viewBox="0 0 16 16"><circle cx="8" cy="8" r="6.400" fill="#3cc44c" stroke="#1a981a" stroke-width="1.300"/><rect x="6.900" y="4" width="2.200" height="8" fill="#fff"/><rect x="4" y="6.900" width="8" height="2.200" fill="#fff"/></svg><span class="lk">Создать документы</span></div><div class="c c2">УПД</div><div class="c c3">03.12.2021</div><div class="c c4">24581</div><div class="c c5">720,00</div><div class="c c6">Импульс</div><div class="c c7">Алиев Н. А. ИП</div><div class="c c8"></div></div>
<div class="r" style="top:60px"><div class="c c1"><svg class="ic" width="17" height="17" viewBox="0 0 17 17"><rect x="1.600" y="1.800" width="11" height="12.500" fill="#fff" stroke="#a04a22" stroke-width="1.300"/><rect x="4.500" y="0.300" width="5.200" height="2.800" fill="#d0d4e4" stroke="#8a90a8" stroke-width=".7"/><path d="M3.500 5.500h7.500M3.500 7.500h7.500M3.500 9.500h7.500M3.500 11.500h4" stroke="#a8c4f0" stroke-width="1"/><path d="M8 12.500 L10.300 15.300 L15.300 10.300" stroke="#18a828" stroke-width="2.400" fill="none"/></svg><span class="lk br">&lt;Не поддерживается&gt;</span></div><div class="c c2">Прочее</div><div class="c c3">10.12.2021</div><div class="c c4">бн</div><div class="c c5"></div><div class="c c6">Импульс</div><div class="c c7">Алиев Н. А. ИП</div><div class="c c8">Структурная ед<span class="e">...</span></div></div>
<div class="r" style="top:79px"><div class="c c1"><svg class="ic" width="16" height="16" viewBox="0 0 16 16"><circle cx="8" cy="8" r="6.400" fill="#3cc44c" stroke="#1a981a" stroke-width="1.300"/><rect x="6.900" y="4" width="2.200" height="8" fill="#fff"/><rect x="4" y="6.900" width="8" height="2.200" fill="#fff"/></svg><span class="lk">Создать документы</span></div><div class="c c2">УПД</div><div class="c c3">09.12.2021</div><div class="c c4">24959</div><div class="c c5">480,00</div><div class="c c6">Импульс</div><div class="c c7">Алиев Н. А. ИП</div><div class="c c8"></div></div>
<div class="r" style="top:98px"><div class="c c1"><svg class="ic" width="16" height="16" viewBox="0 0 16 16"><path d="M8 2.300 L15.200 14 H0.800 Z" fill="#ffd800" stroke="#e8b400" stroke-width="1.200" stroke-linejoin="round"/><rect x="7" y="5.300" width="2" height="5" rx=".5" fill="#3a3a00"/><rect x="7" y="11" width="2" height="1.800" fill="#3a3a00"/></svg><span class="lk">Сопоставить номенклатуру</span></div><div class="c c2">УПД</div><div class="c c3">18.12.2021</div><div class="c c4">25418</div><div class="c c5">145 114,10</div><div class="c c6">Импульс</div><div class="c c7">Алиев Н. А. ИП</div><div class="c c8"></div></div>
<div class="r" style="top:117px"><div class="c c1"><svg class="ic" width="16" height="16" viewBox="0 0 16 16"><circle cx="8" cy="8" r="6.400" fill="#3cc44c" stroke="#1a981a" stroke-width="1.300"/><rect x="6.900" y="4" width="2.200" height="8" fill="#fff"/><rect x="4" y="6.900" width="8" height="2.200" fill="#fff"/></svg><span class="lk">Создать документы</span></div><div class="c c2">УПД</div><div class="c c3">21.12.2021</div><div class="c c4">25585</div><div class="c c5">480,00</div><div class="c c6">Импульс</div><div class="c c7">Алиев Н. А. ИП</div><div class="c c8"></div></div>
<div class="r" style="top:136px"><div class="c c1"><svg class="ic" width="16" height="16" viewBox="0 0 16 16"><circle cx="8" cy="8" r="6.400" fill="#3cc44c" stroke="#1a981a" stroke-width="1.300"/><rect x="6.900" y="4" width="2.200" height="8" fill="#fff"/><rect x="4" y="6.900" width="8" height="2.200" fill="#fff"/></svg><span class="lk">Создать документы</span></div><div class="c c2">УПД</div><div class="c c3">25.12.2021</div><div class="c c4">25834</div><div class="c c5">100 624,00</div><div class="c c6">Импульс</div><div class="c c7">Алиев Н. А. ИП</div><div class="c c8"></div></div>
<div class="r" style="top:155px"><div class="c c1"><svg class="ic" width="16" height="16" viewBox="0 0 16 16"><circle cx="8" cy="8" r="6.400" fill="#3cc44c" stroke="#1a981a" stroke-width="1.300"/><rect x="6.900" y="4" width="2.200" height="8" fill="#fff"/><rect x="4" y="6.900" width="8" height="2.200" fill="#fff"/></svg><span class="lk">Создать документы</span></div><div class="c c2">УПД</div><div class="c c3">27.12.2021</div><div class="c c4">25935</div><div class="c c5">960,00</div><div class="c c6">Импульс</div><div class="c c7">Алиев Н. А. ИП</div><div class="c c8"></div></div>
<div class="r" style="top:174px"><div class="c c1"><svg class="ic" width="16" height="16" viewBox="0 0 16 16"><circle cx="8" cy="8" r="6.400" fill="#3cc44c" stroke="#1a981a" stroke-width="1.300"/><rect x="6.900" y="4" width="2.200" height="8" fill="#fff"/><rect x="4" y="6.900" width="8" height="2.200" fill="#fff"/></svg><span class="lk">Создать документы</span></div><div class="c c2">УПД</div><div class="c c3">08.01.2022</div><div class="c c4">209</div><div class="c c5">173 994,30</div><div class="c c6">Импульс</div><div class="c c7">Алиев Н. А. ИП</div><div class="c c8"></div></div>
<div class="r" style="top:193px"><div class="c c1"><svg class="ic" width="16" height="16" viewBox="0 0 16 16"><circle cx="8" cy="8" r="6.400" fill="#3cc44c" stroke="#1a981a" stroke-width="1.300"/><rect x="6.900" y="4" width="2.200" height="8" fill="#fff"/><rect x="4" y="6.900" width="8" height="2.200" fill="#fff"/></svg><span class="lk">Создать документы</span></div><div class="c c2">УПД</div><div class="c c3">11.01.2022</div><div class="c c4">349</div><div class="c c5">400,00</div><div class="c c6">Импульс</div><div class="c c7">Алиев Н. А. ИП</div><div class="c c8"></div></div>
<div class="r" style="top:212px"><div class="c c1"><svg class="ic" width="16" height="16" viewBox="0 0 16 16"><circle cx="8" cy="8" r="6.400" fill="#3cc44c" stroke="#1a981a" stroke-width="1.300"/><rect x="6.900" y="4" width="2.200" height="8" fill="#fff"/><rect x="4" y="6.900" width="8" height="2.200" fill="#fff"/></svg><span class="lk">Создать документы</span></div><div class="c c2">УПД</div><div class="c c3">03.02.2022</div><div class="c c4">1560</div><div class="c c5">400,00</div><div class="c c6">Импульс</div><div class="c c7">Алиев Н. А. ИП</div><div class="c c8"></div></div>
<div class="r" style="top:231px"><div class="c c1"><svg class="ic" width="16" height="16" viewBox="0 0 16 16"><circle cx="8" cy="8" r="6.400" fill="#3cc44c" stroke="#1a981a" stroke-width="1.300"/><rect x="6.900" y="4" width="2.200" height="8" fill="#fff"/><rect x="4" y="6.900" width="8" height="2.200" fill="#fff"/></svg><span class="lk">Создать документы</span></div><div class="c c2">УПД</div><div class="c c3">16.02.2022</div><div class="c c4">2158</div><div class="c c5">15 902,70</div><div class="c c6">Импульс</div><div class="c c7">Алиев Н. А. ИП</div><div class="c c8"></div></div>
<div class="r" style="top:250px"><div class="c c1"><svg class="ic" width="17" height="17" viewBox="0 0 17 17"><rect x="1.600" y="1.800" width="11" height="12.500" fill="#fff" stroke="#a04a22" stroke-width="1.300"/><rect x="4.500" y="0.300" width="5.200" height="2.800" fill="#d0d4e4" stroke="#8a90a8" stroke-width=".7"/><path d="M3.500 5.500h7.500M3.500 7.500h7.500M3.500 9.500h7.500M3.500 11.500h4" stroke="#a8c4f0" stroke-width="1"/><path d="M8 12.500 L10.300 15.300 L15.300 10.300" stroke="#18a828" stroke-width="2.400" fill="none"/></svg><span class="lk br">&lt;Не поддерживается&gt;</span></div><div class="c c2">Прочее</div><div class="c c3">25.02.2022</div><div class="c c4">б/н</div><div class="c c5"></div><div class="c c6">Импульс</div><div class="c c7">Алиев Н. А. ИП</div><div class="c c8">Структурная ед<span class="e">...</span></div></div>
<div class="r" style="top:269px"><div class="c c1"><svg class="ic" width="16" height="16" viewBox="0 0 16 16"><circle cx="8" cy="8" r="6.400" fill="#3cc44c" stroke="#1a981a" stroke-width="1.300"/><rect x="6.900" y="4" width="2.200" height="8" fill="#fff"/><rect x="4" y="6.900" width="8" height="2.200" fill="#fff"/></svg><span class="lk">Создать документы</span></div><div class="c c2">УПД</div><div class="c c3">22.02.2022</div><div class="c c4">2450</div><div class="c c5">108 825,80</div><div class="c c6">Импульс</div><div class="c c7">Алиев Н. А. ИП</div><div class="c c8"></div></div>
<div class="r" style="top:288px"><div class="c c1"><svg class="ic" width="16" height="16" viewBox="0 0 16 16"><circle cx="8" cy="8" r="6.400" fill="#3cc44c" stroke="#1a981a" stroke-width="1.300"/><rect x="6.900" y="4" width="2.200" height="8" fill="#fff"/><rect x="4" y="6.900" width="8" height="2.200" fill="#fff"/></svg><span class="lk">Создать документы</span></div><div class="c c2">УПД</div><div class="c c3">02.03.2022</div><div class="c c4">2792</div><div class="c c5">47 631,50</div><div class="c c6">Импульс</div><div class="c c7">Алиев Н. А. ИП</div><div class="c c8"></div></div>
<div class="r" style="top:307px"><div class="c c1"><svg class="ic" width="17" height="17" viewBox="0 0 17 17"><path d="M0.600 0.600h12v13h-12z" fill="#fff" stroke="#9494bc" stroke-width="1.100"/><path d="M2.500 2.500h1.500M2.500 4.500h3M2.500 6.500h3M2.500 8.500h4.500M2.500 10.500h5" stroke="#a8a8b4" stroke-width="1"/><ellipse cx="10.700" cy="14.600" rx="3.400" ry="1.500" fill="#f4a818"/><ellipse cx="10.700" cy="13" rx="3.400" ry="1.500" fill="#ffe428" stroke="#f0b020" stroke-width=".5"/><ellipse cx="10.700" cy="11.400" rx="3.400" ry="1.500" fill="#ffe428" stroke="#f0b020" stroke-width=".5"/><path d="M5.300 0.800h4.500q2.700 0 2.700 2.700v1h2.800l-4.400 4.700l-4.400 -4.700h3v-.400q0 -.900 -.900 -.900h-3.300z" fill="#22eea0" stroke="#12903c" stroke-width="1" stroke-linejoin="round"/></svg><span class="lk">2 документа</span></div><div class="c c2">УПД</div><div class="c c3">03.03.2022</div><div class="c c4">2864</div><div class="c c5">400,00</div><div class="c c6">Импульс</div><div class="c c7">Алиев Н. А. ИП</div><div class="c c8"></div></div>
<div class="r" style="top:326px"><div class="c c1"><svg class="ic" width="16" height="16" viewBox="0 0 16 16"><path d="M8 2.300 L15.200 14 H0.800 Z" fill="#ffd800" stroke="#e8b400" stroke-width="1.200" stroke-linejoin="round"/><rect x="7" y="5.300" width="2" height="5" rx=".5" fill="#3a3a00"/><rect x="7" y="11" width="2" height="1.800" fill="#3a3a00"/></svg><span class="lk">Сопоставить номенклатуру</span></div><div class="c c2">УПД</div><div class="c c3">09.03.2022</div><div class="c c4">3111</div><div class="c c5">131 714,80</div><div class="c c6">Импульс</div><div class="c c7">Алиев Н. А. ИП</div><div class="c c8"></div></div>
<div class="r" style="top:345px"><div class="c c1"><svg class="ic" width="17" height="17" viewBox="0 0 17 17"><path d="M0.600 0.600h12v13h-12z" fill="#fff" stroke="#9494bc" stroke-width="1.100"/><path d="M2.500 2.500h1.500M2.500 4.500h3M2.500 6.500h3M2.500 8.500h4.500M2.500 10.500h5" stroke="#a8a8b4" stroke-width="1"/><ellipse cx="10.700" cy="14.600" rx="3.400" ry="1.500" fill="#f4a818"/><ellipse cx="10.700" cy="13" rx="3.400" ry="1.500" fill="#ffe428" stroke="#f0b020" stroke-width=".5"/><ellipse cx="10.700" cy="11.400" rx="3.400" ry="1.500" fill="#ffe428" stroke="#f0b020" stroke-width=".5"/><path d="M5.300 0.800h4.500q2.700 0 2.700 2.700v1h2.800l-4.400 4.700l-4.400 -4.700h3v-.400q0 -.900 -.900 -.900h-3.300z" fill="#22eea0" stroke="#12903c" stroke-width="1" stroke-linejoin="round"/></svg><span class="lk">2 документа</span></div><div class="c c2">УПД</div><div class="c c3">10.03.2022</div><div class="c c4">3176</div><div class="c c5">400,00</div><div class="c c6">Импульс</div><div class="c c7">Алиев Н. А. ИП</div><div class="c c8"></div></div>
<div class="r" style="top:364px"><div class="c c1"><svg class="ic" width="16" height="16" viewBox="0 0 16 16"><circle cx="8" cy="8" r="6.400" fill="#3cc44c" stroke="#1a981a" stroke-width="1.300"/><rect x="6.900" y="4" width="2.200" height="8" fill="#fff"/><rect x="4" y="6.900" width="8" height="2.200" fill="#fff"/></svg><span class="lk">Создать документы</span></div><div class="c c2">УКД</div><div class="c c3">09.09.2022</div><div class="c c4">Т-35412</div><div class="c c5"></div><div class="c c6">ИП Кутей Е.А.</div><div class="c c7">Кулиева Малей<span class="e">...</span></div><div class="c c8"></div></div>
<div class="r" style="top:383px"><div class="c c1"><svg class="ic" width="16" height="16" viewBox="0 0 16 16"><circle cx="8" cy="8" r="6.400" fill="#3cc44c" stroke="#1a981a" stroke-width="1.300"/><rect x="6.900" y="4" width="2.200" height="8" fill="#fff"/><rect x="4" y="6.900" width="8" height="2.200" fill="#fff"/></svg><span class="lk">Создать документы</span></div><div class="c c2">УПД</div><div class="c c3">17.09.2022</div><div class="c c4">УТ-7849</div><div class="c c5">65 723,52</div><div class="c c6">ИП Бадьин В.В</div><div class="c c7">Кулиева Малей<span class="e">...</span></div><div class="c c8"></div></div>
<div class="r" style="top:402px"><div class="c c1"><svg class="ic" width="16" height="16" viewBox="0 0 16 16"><circle cx="8" cy="8" r="6.400" fill="#3cc44c" stroke="#1a981a" stroke-width="1.300"/><rect x="6.900" y="4" width="2.200" height="8" fill="#fff"/><rect x="4" y="6.900" width="8" height="2.200" fill="#fff"/></svg><span class="lk">Создать документы</span></div><div class="c c2">Товарная накла<span class="e">...</span></div><div class="c c3">13.09.2022</div><div class="c c4">УТ-7520</div><div class="c c5">54 652,10</div><div class="c c6">ИП Бадьин В.В</div><div class="c c7">Кулиева Малей<span class="e">...</span></div><div class="c c8">Структурная ед<span class="e">...</span></div></div>
<div class="r" style="top:421px"><div class="c c1"><svg class="ic" width="16" height="16" viewBox="0 0 16 16"><path d="M8 2.300 L15.200 14 H0.800 Z" fill="#ffd800" stroke="#e8b400" stroke-width="1.200" stroke-linejoin="round"/><rect x="7" y="5.300" width="2" height="5" rx=".5" fill="#3a3a00"/><rect x="7" y="11" width="2" height="1.800" fill="#3a3a00"/></svg><span class="lk">Сопоставить номенклатуру</span></div><div class="c c2">Счет-фактура</div><div class="c c3">13.09.2022</div><div class="c c4">УТ-7520</div><div class="c c5">54 652,10</div><div class="c c6">ИП Бадьин В.В</div><div class="c c7">Кулиева Малей<span class="e">...</span></div><div class="c c8"></div></div>
<div class="r" style="top:440px"><div class="c c1"><svg class="ic" width="16" height="16" viewBox="0 0 16 16"><path d="M8 2.300 L15.200 14 H0.800 Z" fill="#ffd800" stroke="#e8b400" stroke-width="1.200" stroke-linejoin="round"/><rect x="7" y="5.300" width="2" height="5" rx=".5" fill="#3a3a00"/><rect x="7" y="11" width="2" height="1.800" fill="#3a3a00"/></svg><span class="lk">Сопоставить номенклатуру</span></div><div class="c c2">УПД</div><div class="c c3">25.09.</div><div class="c c4">УТ-8267</div><div class="c c5">69 575,30</div><div class="c c6">ИП Бадьин В.В</div><div class="c c7">Кулиева Малей<span class="e">...</span></div><div class="c c8"></div></div>
<div class="vl" style="left:0;height:476px"></div>
<div class="vl" style="left:272px"></div>
<div class="vl" style="left:369px"></div>
<div class="vl" style="left:450px"></div>
<div class="vl" style="left:637px"></div>
<div class="vl" style="left:758px"></div>
<div class="vl" style="left:855px"></div>
<div class="vl" style="left:952px"></div>
<div class="vl" style="left:1049px"></div>
<div class="vl" style="left:1053px"></div>
<div class="vl" style="left:1069px;height:476px"></div>
</div>

<!-- child title icons -->
<svg style="position:absolute;left:28px;top:102px" width="1334" height="18" viewBox="28 102 1334 18">
<path d="M31.500 103.500h8l3 3v10h-11z" fill="#fff" stroke="#6f8f9c" stroke-width="1"/><path d="M39.500 103.500v3h3" fill="#d8d8fc" stroke="#8aa0c0" stroke-width=".8"/><rect x="33" y="112" width="8" height="2.500" fill="#d4f8ff"/>
<rect x="1312" y="114" width="8" height="2" fill="#1a1a00"/>
<path d="M1333.700 108v-2.500h7v7.500h-3" fill="none" stroke="#1a1a00" stroke-width="1.300"/><rect x="1330.600" y="108.600" width="6.500" height="7" fill="none" stroke="#1a1a00" stroke-width="1.300"/>
<path d="M1352 106l9.500 9.500M1361.500 106l-9.500 9.500" stroke="#1a1a00" stroke-width="2"/>
</svg>
<!-- tab icon -->
<svg style="position:absolute;left:7px;top:104px" width="14" height="16" viewBox="7 104 14 16">
<path d="M8.500 105.500h8l3 3v10h-11z" fill="#fff" stroke="#7aa0a8" stroke-width="1"/><path d="M16.500 105.500v3h3" fill="#d8d8fc" stroke="#98a8d0" stroke-width=".7"/>
<g><rect x="10" y="108" width="1.200" height="1" fill="#2880c0"/><rect x="12" y="108" width="3.500" height="1" fill="#706850"/><rect x="10" y="110" width="1.200" height="1" fill="#2880c0"/><rect x="16" y="110" width="2" height="1" fill="#f05010"/><rect x="10" y="112" width="1.200" height="1" fill="#2880c0"/><rect x="16" y="112" width="2" height="1" fill="#e03050"/><rect x="12.200" y="110.200" width="2.600" height="2.600" fill="#fff" stroke="#80a890" stroke-width=".7"/><rect x="10" y="114" width="1.200" height="1" fill="#2880c0"/><rect x="12" y="114" width="3.500" height="1" fill="#706850"/><rect x="16" y="114" width="2" height="1" fill="#f05010"/><rect x="10" y="116" width="1.200" height="1" fill="#2880c0"/><rect x="12" y="116" width="3.500" height="1" fill="#706850"/><rect x="16" y="116" width="2" height="1" fill="#f05010"/><rect x="10" y="115" width="8" height="1" fill="#d4f8ff"/></g>
</svg>
<!-- scrollbars -->
<svg style="position:absolute;left:280px;top:161px" width="1071" height="476" viewBox="280 161 1071 476">
<!-- sort mark -->
<rect x="538" y="168" width="4" height="1.500" fill="#c4c060"/><rect x="536" y="170" width="8" height="2" fill="#d0d088"/><rect x="534" y="172.500" width="12" height="1.500" fill="#dce0b0"/><rect x="534" y="174" width="12" height="1" fill="#c4bc58"/>
<!-- vertical -->
<path d="M1338 174.500l3.500 -6.500l3.500 6.500z" fill="#dcdcb0"/><path d="M1338 174.500h7" stroke="#d4d4fc" stroke-width="1"/>
<path d="M1334 197.500h15" stroke="#b9b9a6" stroke-width="1"/><rect x="1347" y="183" width="2" height="14" fill="#ffd090"/>
<path d="M1339 191q1 -3 4.500 -2.500q-2 1 -2.500 4z" fill="#d8d0a0"/>
<path d="M1334 602.500h15" stroke="#b9b9a6" stroke-width="1"/>
<path d="M1338 610h7l-3.500 6.500z" fill="#8a8a90"/><path d="M1338 610h7l-1 1.600h-5z" fill="#6a6a50"/>
<!-- horizontal -->
<rect x="280" y="623" width="1054" height="1" fill="#b9b9a6"/>
<rect x="281" y="624" width="1052" height="13" fill="#fff"/><rect x="280" y="624" width="1" height="13" fill="#b9b9a6"/>
<path d="M301.500 624v13M956.500 624v13M1312.500 624v13" stroke="#b9b9a6" stroke-width="1"/>
<path d="M294 628v7l-6.500 -3.500z" fill="#d4d0f0"/><path d="M294 628v7l-1.500 -.8v-5.400z" fill="#dcd8b8"/>
<path d="M1320 628v7l6.500 -3.500z" fill="#8c8c98"/><path d="M1320 628v7l1.600 -.9v-5.200z" fill="#5e5e48"/>
<path d="M627 632q.5 -2.500 3.500 -2q-1.500 .8 -2 3z" fill="#d8d0a0"/>
<rect x="1334" y="623" width="15" height="1" fill="#ececb8"/>
<rect x="1333" y="624" width="1" height="13" fill="#ececb8"/>
</svg>
<!-- partial row 24 icon -->
<div style="position:absolute;left:285px;top:620px;width:16px;height:3px;overflow:hidden"><svg width="16" height="16" viewBox="0 0 16 16" style="position:absolute;left:0;top:0"><circle cx="8" cy="8" r="6.400" fill="#3cc44c" stroke="#1a981a" stroke-width="1.300"/></svg></div>
<!-- tooltip -->
<div style="position:absolute;left:685px;top:603px;width:178px;height:20px;box-sizing:border-box;background:#fff;border:1px solid #70705a"></div>
<div class="t" id="tip" style="left:691px;top:605px;font-size:12px;line-height:16px;height:16px;color:#575768">*Денвик контакт.txt – Блокнот</div>
<!-- bottom popup -->
<svg style="position:absolute;left:650px;top:625px" width="255" height="12" viewBox="650 625 255 12">
<path d="M653 637l9 -4.500l5.500 -4.500h211l5.500 4.500l16 4.500z" fill="#dcdca8"/>
<path d="M672 629q1.500 -1.800 4 -1.800h198q2.500 0 4 1.800z" fill="#dcdcfc"/>
<rect x="667" y="631" width="216.500" height="6" fill="#fff"/>
</svg>

</body></html>
